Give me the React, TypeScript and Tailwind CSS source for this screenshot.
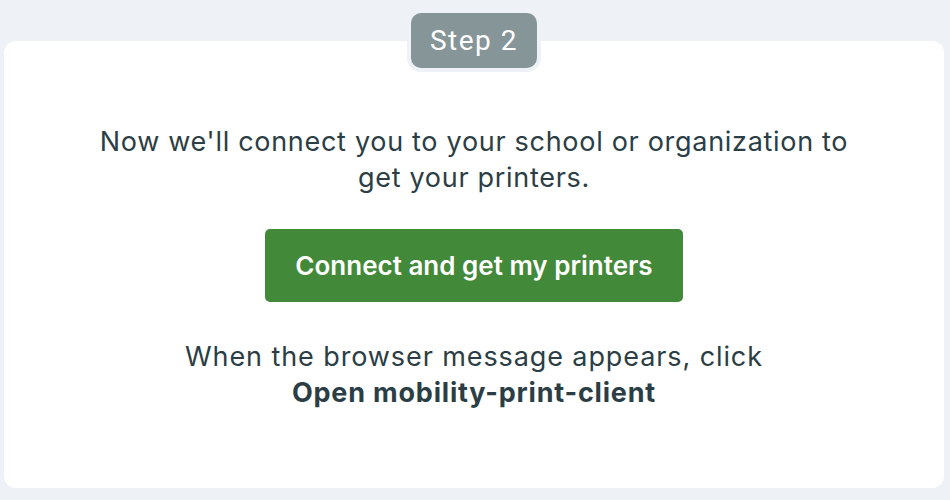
export default function App() {
  return (
    <div className="h-[500px] w-[950px] bg-[#eef1f6] pt-[41px] pl-[4px] pr-[6px] pb-[12px]">
      <div className="relative flex h-[447px] flex-col items-center rounded-[12px] bg-white font-['Inter',sans-serif] text-[#2c3e45]">
        <div className="absolute left-1/2 top-[-32px] -translate-x-1/2 rounded-[14px] border-4 border-[#eef1f6] bg-[#869598] px-[19px] py-[11px] font-['Roboto',sans-serif] text-[28px] leading-[33px] tracking-[1.5px] text-white">
          Step 2
        </div>
        <p className="mt-[83px] text-center text-[27px] leading-[36px] tracking-[0.7px]">
          Now we'll connect you to your school or organization to
          <br />
          get your printers.
        </p>
        <button className="mt-[33px] h-[73px] w-[418px] rounded-[5px] bg-[#43893a] text-[26px] font-semibold text-white">
          Connect and get my printers
        </button>
        <p className="mt-[37px] text-center text-[27px] leading-[36px] tracking-[0.9px]">
          When the browser message appears, click
          <br />
          <span className="font-bold tracking-[0.8px]">Open mobility-print-client</span>
        </p>
      </div>
    </div>
  );
}
